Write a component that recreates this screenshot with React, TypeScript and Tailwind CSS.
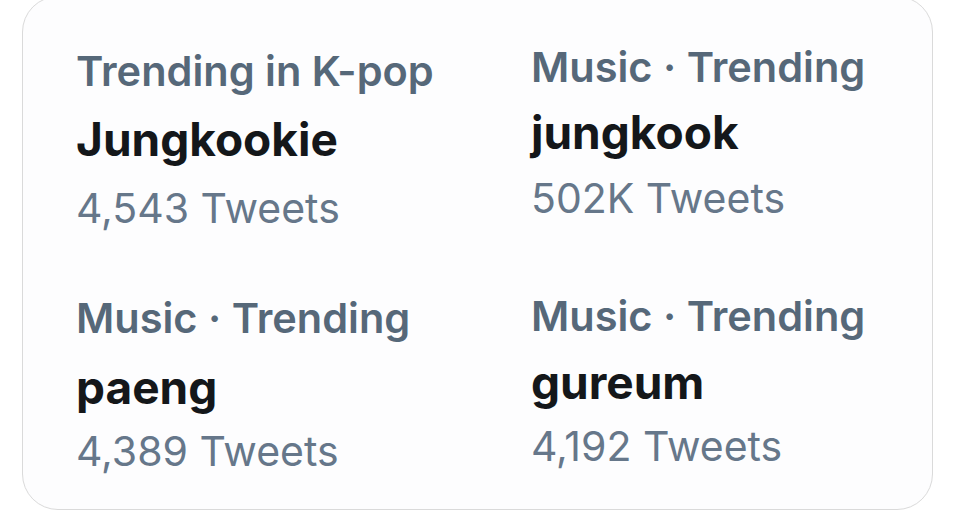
type Trend = {
  title: string;
  name: string;
  count: string;
  pad: string;
  nameGap: string;
  countGap: string;
};

const trends: Trend[] = [
  { title: "Trending in K-pop", name: "Jungkookie", count: "4,543 Tweets", pad: "pt-[50px]", nameGap: "mt-[18px]", countGap: "mt-[19px]" },
  { title: "Music · Trending", name: "jungkook", count: "502K Tweets", pad: "pt-[46px]", nameGap: "mt-[15px]", countGap: "mt-[16px]" },
  { title: "Music · Trending", name: "paeng", count: "4,389 Tweets", pad: "pt-[50px]", nameGap: "mt-[19px]", countGap: "mt-[14px]" },
  { title: "Music · Trending", name: "gureum", count: "4,192 Tweets", pad: "pt-[48px]", nameGap: "mt-[16px]", countGap: "mt-[14px]" },
];

function TrendCell({ t }: { t: Trend }) {
  return (
    <div className={`flex flex-col ${t.pad}`}>
      <span className="text-[41.5px] leading-[48px] font-semibold text-[#566879] whitespace-nowrap">
        {t.title}
      </span>
      <span className={`text-[46px] leading-[52px] font-bold text-[#14171a] whitespace-nowrap ${t.nameGap}`}>
        {t.name}
      </span>
      <span className={`text-[41px] leading-[48px] text-[#66778a] whitespace-nowrap ${t.countGap}`}>
        {t.count}
      </span>
    </div>
  );
}

export default function App() {
  return (
    <div className="w-[960px] h-[530px] bg-white overflow-hidden" style={{ fontFamily: "Inter, 'Liberation Sans', sans-serif" }}>
      <div className="ml-[22px] mt-[-4px] w-[911px] h-[514px] rounded-[36px] border border-[#dadada] bg-[#fdfdfe] pl-[53px]">
        <div className="grid grid-cols-[455px_1fr] grid-rows-[247px_1fr]">
          {trends.map((t) => (
            <TrendCell key={t.name} t={t} />
          ))}
        </div>
      </div>
    </div>
  );
}
